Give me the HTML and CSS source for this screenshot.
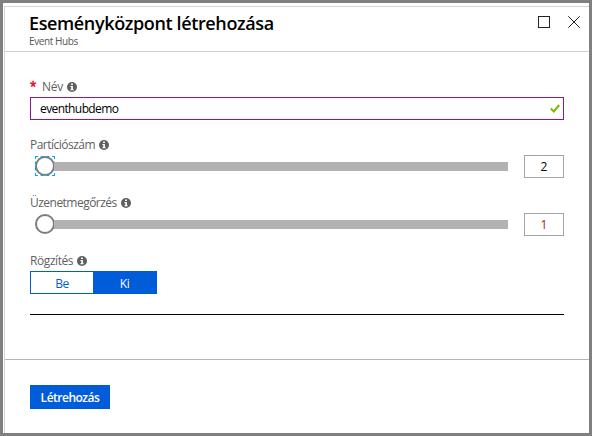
FILE: index.html
```html
<!DOCTYPE html>
<html lang="hu">
<head>
<meta charset="utf-8">
<title>Eseményközpont létrehozása</title>
<link rel="stylesheet" href="styles.css">
</head>
<body>
<svg width="0" height="0" class="defs">
  <symbol id="info" viewBox="0 0 10 10">
    <circle cx="5" cy="5" r="5" fill="#5f5f5f"/>
    <path d="M4.1 1.6h1.8v1.5H4.1zM3.4 4h2.5v3.3h.8v1H3.4v-1h.8V5h-.8z" fill="#fff"/>
  </symbol>
</svg>
<div class="blade">
  <header class="header">
    <div class="titles">
      <h1>Eseményközpont létrehozása</h1>
      <p>Event Hubs</p>
    </div>
    <div class="window-actions">
      <svg width="12" height="12" viewBox="0 0 12 12"><rect x=".5" y=".5" width="11" height="11" fill="none" stroke="#222"/></svg>
      <svg width="12" height="12" viewBox="0 0 12 12"><path d="M.3.3l11.4 11.4M11.7.3L.3 11.7" fill="none" stroke="#222"/></svg>
    </div>
  </header>
  <main class="form">
    <section class="field">
      <div class="label"><span class="required">*</span><span class="t-name">Név</span><svg class="info"><use href="#info"/></svg></div>
      <div class="input"><span class="t-value">eventhubdemo</span>
        <svg width="10" height="9" viewBox="0 0 10 9"><path d="M.8 4.5l3 3L9.2 1" fill="none" stroke="#7fba00" stroke-width="2"/></svg>
      </div>
    </section>
    <section class="field">
      <div class="label"><span class="t-part">Partíciószám</span><svg class="info"><use href="#info"/></svg></div>
      <div class="slider-row">
        <div class="slider"><span class="thumb focused"><i></i></span><span class="track"></span></div>
        <div class="number">2</div>
      </div>
    </section>
    <section class="field">
      <div class="label"><span class="t-keep">Üzenetmegőrzés</span><svg class="info"><use href="#info"/></svg></div>
      <div class="slider-row">
        <div class="slider"><span class="thumb"><i></i></span><span class="track"></span></div>
        <div class="number changed">1</div>
      </div>
    </section>
    <section class="field">
      <div class="label"><span class="t-capture">Rögzítés</span><svg class="info"><use href="#info"/></svg></div>
      <div class="toggle"><span>Be</span><span class="on">Ki</span></div>
    </section>
    <hr>
  </main>
  <footer class="footer"><button><span class="t-create">Létrehozás</span></button></footer>
</div>
</body>
</html>
```
FILE: styles.css
```css
* { box-sizing: border-box; }
body {
  margin: 0;
  width: 592px;
  height: 436px;
  overflow: hidden;
  border: 3px solid #808080;
  padding: 3px 0 0 1px;
  background: #fff;
  font: 12px/16px "Open Sans", "Noto Sans", sans-serif;
  color: #000;
}
.defs { position: absolute; }
.blade {
  display: flex;
  flex-direction: column;
  height: 427px;
  border-top: 1px solid #d6d6d6;
  border-left: 1px solid #d6d6d6;
}
.header {
  flex: none;
  display: flex;
  justify-content: space-between;
  height: 45px;
  padding: 4px 9px 0 24px;
  border-bottom: 1px solid #d0d0d0;
}
h1, p { margin: 0; white-space: nowrap; }
h1 { font-size: 18px; line-height: 25px; font-weight: 600; letter-spacing: -0.37px; }
p { font-size: 10px; line-height: 11px; color: #555; letter-spacing: -0.4px; }
.window-actions { display: flex; gap: 18px; padding-top: 5px; }
.form { flex: none; padding: 26px 25px 0; height: 307px; }
.field { height: 58px; }
.label {
  display: flex;
  align-items: center;
  height: 19px;
  padding-bottom: 1px;
  color: #5f5f5f;
  white-space: nowrap;
}
.info { width: 10px; height: 10px; margin: 0 0 0 4px; }
.required { width: 12px; color: #e00b1c; font: 16px/16px "Liberation Sans", sans-serif; -webkit-text-stroke: 0.4px #e00b1c; padding-top: 2px; }
.input {
  display: flex;
  align-items: center;
  justify-content: space-between;
  height: 23px;
  padding: 0 3px 0 9px;
  border: 1px solid #881798;
}
.slider-row { display: flex; justify-content: space-between; height: 23px; }
.slider { display: flex; align-items: center; width: 478px; padding-left: 5px; }
.thumb { width: 20px; height: 20px; flex: none; margin-bottom: 1px; }
.thumb.focused { outline: 1px dashed #00abec; outline-offset: -1px; }
.thumb i { display: block; width: 20px; height: 20px; border: 2px solid #7d7d7d; border-radius: 50%; background: #fff; }
.track { flex: 1; height: 9px; margin-left: -1px; background: #b2b2b2; }
.number { width: 40px; height: 23px; border: 1px solid #a6a6a6; text-align: center; line-height: 22px; }
.changed { color: #a41a1a; }
.toggle { display: flex; width: 127px; height: 23px; border: 1px solid #015cda; line-height: 23px; text-align: center; color: #015cda; }
.toggle span { width: 62px; letter-spacing: -0.5px; }
.toggle .on { flex: 1; background: #015cda; color: #fff; }
hr { height: 1px; border: 0; margin: 4px 0 0; background: #000; }
.footer { flex: 1; border-top: 1px solid #b5b5b5; padding: 25px 25px 0; }
button {
  display: block;
  width: 80px;
  height: 24px;
  border: 0;
  padding: 0;
  background: #015cda;
  color: #fff;
  font: 600 12px/25px "Open Sans", sans-serif;
}
.t-name { letter-spacing: -0.3px; }
.t-value { letter-spacing: -0.6px; padding-top: 1px; }
.t-part, .t-keep { letter-spacing: -0.52px; }
.t-capture { letter-spacing: -0.42px; }
.t-create { letter-spacing: -0.5px; }
```
